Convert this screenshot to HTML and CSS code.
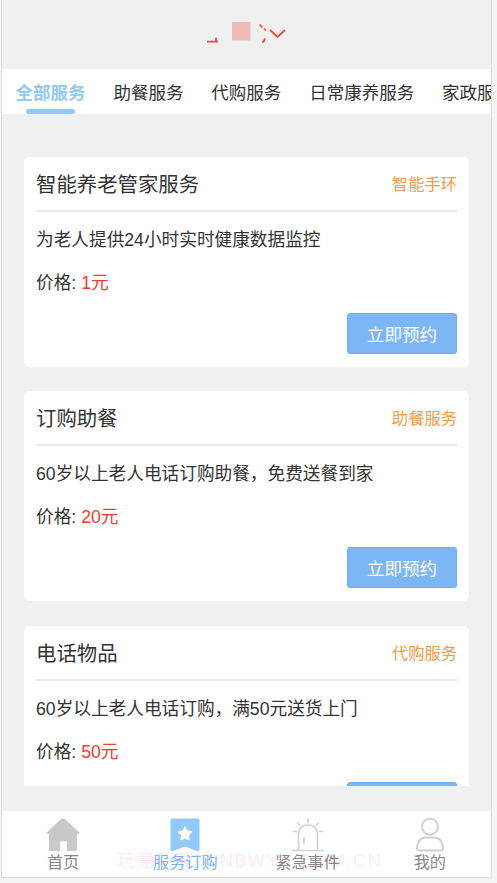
FILE: index.html
```html
<!DOCTYPE html>
<html lang="zh-CN">
<head>
<meta charset="utf-8">
<title>服务订购</title>
<link rel="stylesheet" href="styles.css">
</head>
<body>
<div class="app">
  <header class="header">
    <svg class="header-mark" width="82" height="28" viewBox="0 0 82 28" fill="none" stroke="#ee4b40" stroke-width="1.7">
      <path d="M2 21.7h11M11 17.5v4"/>
      <path d="M27 2h18.500v18.500H27z" fill="#efbbb8" stroke="none"/>
      <path d="M54.500 4.500l3 3M59 8.500l2 2M60 18.500c-.4 2-1.100 3.600-3 3.500"/>
      <path d="M65 10l7.500 7 7.500-7" stroke-width="1.900"/>
    </svg>
  </header>
  <nav class="tabs">
    <a class="tab tab-active">全部服务</a>
    <a class="tab">助餐服务</a>
    <a class="tab">代购服务</a>
    <a class="tab">日常康养服务</a>
    <a class="tab">家政服务</a>
  </nav>
  <main class="list">
    <article class="card">
      <div class="card-head"><h2 class="title">智能养老管家服务</h2><span class="tag">智能手环</span></div>
      <p class="desc">为老人提供24小时实时健康数据监控</p>
      <p class="price">价格: <span class="amount">1元</span></p>
      <button class="book">立即预约</button>
    </article>
    <article class="card">
      <div class="card-head"><h2 class="title">订购助餐</h2><span class="tag">助餐服务</span></div>
      <p class="desc">60岁以上老人电话订购助餐，免费送餐到家</p>
      <p class="price">价格: <span class="amount">20元</span></p>
      <button class="book">立即预约</button>
    </article>
    <article class="card">
      <div class="card-head"><h2 class="title">电话物品</h2><span class="tag">代购服务</span></div>
      <p class="desc">60岁以上老人电话订购，满50元送货上门</p>
      <p class="price">价格: <span class="amount">50元</span></p>
      <button class="book">立即预约</button>
    </article>
  </main>
  <footer class="tabbar">
    <a class="item">
      <svg class="icon" width="36" height="36" viewBox="0 0 36 36"><path d="M18 1.500c1.200 0 2 .6 3 1.600l12.500 11.700c1.300 1.300 1 2.200-.5 2.200h-1v15c0 1.500-.6 2-2 2h-8v-8c0-1.400-.6-2-2-2h-3c-1.400 0-2 .6-2 2v8H6c-1.400 0-2-.6-2-2V17H3c-1.500 0-1.800-.9-.5-2.200L15 3.100c1-1 1.800-1.600 3-1.600z" fill="#c9c9c9"/></svg>
      <span>首页</span>
    </a>
    <a class="item item-active">
      <svg class="icon" width="36" height="36" viewBox="0 0 36 36"><path d="M5.500 1.500h25q2 0 2 2v29q0 2.500-2.500 1.500L18 29.500 6 34q-2.500 1-2.500-1.500v-29q0-2 2-2z" fill="#92c8fa"/><path d="M18 9.500l2.100 4.400 4.800.8-3.400 3.500.7 4.900-4.200-2.200-4.200 2.200.7-4.900-3.400-3.500 4.800-.8z" fill="#fff" stroke="#fff" stroke-linejoin="round"/></svg>
      <span>服务订购</span>
    </a>
    <a class="item">
      <svg class="icon" width="36" height="36" viewBox="0 0 36 36" fill="none" stroke="#d2d2d2" stroke-width="1.700"><path d="M2 33.500h32M8.500 33V17.500Q8.500 8 18 8t9.500 9.500V33M14 20v7M18 1.500V6M7 5.500l3 3M29 5.500l-3 3M2.500 14.500H7M29 14.500h4.500"/></svg>
      <span>紧急事件</span>
    </a>
    <a class="item">
      <svg class="icon" width="36" height="36" viewBox="0 0 36 36" fill="none" stroke="#d0d0d0" stroke-width="2"><circle cx="18" cy="9.700" r="8"/><path d="M8 33.500h20q3.500 0 3-3.500-1.200-9.500-9-9.500h-8q-7.800 0-9 9.500-.5 3.500 3 3.500z"/></svg>
      <span>我的</span>
    </a>
  </footer>
</div>
<div class="watermark">玩意下载 WNBWYX.COM.CN</div>
</body>
</html>
```
FILE: styles.css
```css
* { box-sizing: border-box; }
body {
  margin: 0;
  height: 883px;
  padding: 0 5px 5px 1px;
  background: #f4f4f4;
  color: #333;
  font-family: "Liberation Sans", "Noto Sans CJK SC", sans-serif;
  overflow: hidden;
  position: relative;
}
.app {
  height: 878px;
  border: 1px solid #dcdcdc;
  border-top: 0;
  background: #f0f0f0;
  display: flex;
  flex-direction: column;
}
.header {
  height: 69px;
  flex: none;
  padding: 20px 0 0 203px;
}
.header-mark { display: block; }
.tabs {
  flex: none;
  height: 45px;
  padding-left: 13.500px;
  display: flex;
  gap: 27.900px;
  background: #fff;
  overflow: hidden;
}
.tab {
  flex: none;
  font-size: 17.500px;
  line-height: 48px;
  height: 45px;
  white-space: nowrap;
}
.tab-active {
  color: #92c8fa;
  font-weight: bold;
  display: flex;
  flex-direction: column;
  align-items: center;
}
.tab-active::after {
  content: "";
  flex: none;
  width: 49px;
  height: 5px;
  margin-top: -8px;
  border-radius: 3px;
  background: #92c8fa;
}
.list {
  flex: none;
  height: 672px;
  padding: 43px 22px 0;
  display: flex;
  flex-direction: column;
  gap: 24.300px;
  overflow: hidden;
}
.card {
  flex: none;
  height: 210px;
  padding: 0 12px;
  border-radius: 5px;
  background: #fff;
  display: flex;
  flex-direction: column;
}
.card-head {
  height: 55px;
  flex: none;
  display: flex;
  justify-content: space-between;
  align-items: center;
  padding-bottom: 1px;
  border-bottom: 2px solid #e9e9e9;
}
.title {
  margin: 0;
  font-size: 20.400px;
  font-weight: normal;
}
.tag {
  color: #f39a45;
  font-size: 16.300px;
}
.desc, .price {
  margin: 0;
  font-size: 17.670px;
  line-height: 26px;
}
.desc { margin-top: 15px; }
.price { margin-top: 17px; }
.amount { color: #f43b2d; }
.book {
  margin: 17px 0 0;
  align-self: flex-end;
  width: 110px;
  height: 41px;
  flex: none;
  padding: 0;
  border: 1px solid #70aeed;
  border-radius: 3px;
  background: #7cb6f5;
  color: #fff;
  font: 17.600px "Liberation Sans", "Noto Sans CJK SC", sans-serif;
}
.tabbar {
  margin-top: auto;
  height: 66px;
  flex: none;
  display: flex;
  background: #fff;
}
.item {
  flex: 1;
  display: flex;
  flex-direction: column;
  align-items: center;
  padding-top: 6px;
  color: #888;
  font-size: 16.200px;
  line-height: 18px;
}
.item-active { color: #72b9f8; }
.icon { display: block; flex: none; }
.watermark {
  position: absolute;
  left: 117px;
  top: 849px;
  font-size: 18px;
  line-height: 24px;
  letter-spacing: 1.500px;
  white-space: nowrap;
  color: rgba(238, 100, 225, 0.16);
}
```
